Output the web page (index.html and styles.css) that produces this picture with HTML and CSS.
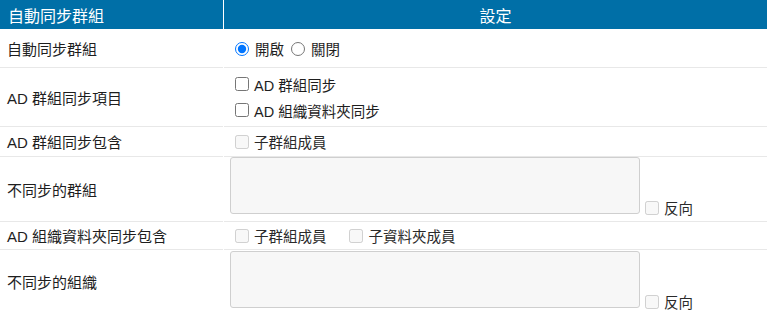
FILE: index.html
```html
<!DOCTYPE html>
<html lang="zh-Hant">
<head>
<meta charset="utf-8">
<link rel="stylesheet" href="styles.css">
</head>
<body>
<table class="grid">
  <thead>
    <tr>
      <th class="h-left">自動同步群組</th>
      <th class="h-right">設定</th>
    </tr>
  </thead>
  <tbody>
    <tr class="r1">
      <td class="lbl">自動同步群組</td>
      <td class="val">
        <label class="opt"><input type="radio" name="sync" checked>開啟</label>
        <label class="opt"><input type="radio" name="sync">關閉</label>
      </td>
    </tr>
    <tr class="r2">
      <td class="lbl">AD 群組同步項目</td>
      <td class="val">
        <label class="opt line"><input type="checkbox">AD 群組同步</label>
        <label class="opt line"><input type="checkbox">AD 組織資料夾同步</label>
      </td>
    </tr>
    <tr class="r3">
      <td class="lbl">AD 群組同步包含</td>
      <td class="val">
        <label class="opt dis"><input type="checkbox" disabled>子群組成員</label>
      </td>
    </tr>
    <tr class="r4">
      <td class="lbl">不同步的群組</td>
      <td class="val">
        <div class="area-row">
          <textarea class="area" disabled></textarea>
          <label class="opt dis"><input type="checkbox" disabled>反向</label>
        </div>
      </td>
    </tr>
    <tr class="r5">
      <td class="lbl">AD 組織資料夾同步包含</td>
      <td class="val">
        <label class="opt dis gap"><input type="checkbox" disabled>子群組成員</label>
        <label class="opt dis"><input type="checkbox" disabled>子資料夾成員</label>
      </td>
    </tr>
    <tr class="r6">
      <td class="lbl">不同步的組織</td>
      <td class="val">
        <div class="area-row">
          <textarea class="area" disabled></textarea>
          <label class="opt dis"><input type="checkbox" disabled>反向</label>
        </div>
      </td>
    </tr>
  </tbody>
</table>
</body>
</html>
```
FILE: styles.css
```css
html, body {
  margin: 0;
  padding: 0;
  background: #fff;
}
body {
  font-family: "Liberation Sans", "Noto Sans CJK TC", sans-serif;
  font-size: 14px;
  color: #222;
}
.grid {
  width: calc(100% + 2px);
  margin-left: -1px;
  border-collapse: separate;
  border-spacing: 1px 0;
}
.grid th {
  background: #006fa7;
  color: #fff;
  font-weight: normal;
  font-size: 16px;
  height: 29px;
  padding: 0 8px;
  border-bottom: 1px solid #fff;
}
.h-left {
  width: 207px;
  text-align: left;
}
.h-right {
  text-align: center;
}
.grid td {
  border-bottom: 1px solid #e8e8e8;
  padding: 0;
  vertical-align: middle;
}
.grid .lbl {
  padding-left: 7px;
  font-size: 15px;
  color: #1e1e1e;
}
.grid .val {
  padding-left: 6px;
}
.r1 td { height: 37px; }
.r2 td { height: 58px; }
.r3 td { height: 29px; }
.r4 td { height: 64px; }
.r5 td { height: 27px; }
.grid .r4 .val { vertical-align: top; padding-top: 0; }
.r6 td { height: 62px; }
.grid .r6 td { border-bottom: none; }
.grid .r6 .val { vertical-align: top; padding-top: 1px; }
.opt {
  display: inline-flex;
  align-items: center;
  color: #1e1e1e;
  font-size: 14.5px;
}
.opt input {
  width: 14px;
  height: 14px;
  margin: 0 5px 0 5px;
}
.opt.line {
  display: flex;
  height: 26px;
}
.opt.dis {
  color: #2a2a2a;
}
.opt.gap {
  margin-right: 14px;
}
.r1 .opt input {
  margin-right: 6px;
}
.r1 .opt + .opt input {
  margin-left: 3px;
}
.area-row {
  display: flex;
  align-items: flex-end;
}
.area {
  width: 410px;
  height: 57px;
  box-sizing: border-box;
  margin: 0;
  background: #f7f7f7;
  border: 1px solid #cfcfcf;
  border-radius: 3px;
  resize: none;
  font-family: inherit;
}
.area-row .opt {
  margin-bottom: -4px;
}
```
